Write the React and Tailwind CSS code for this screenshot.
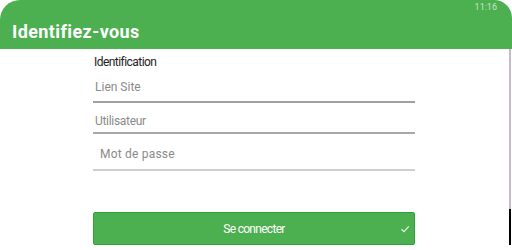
import React from "react";

export default function App() {
  const font = { fontFamily: "Roboto, 'Noto Sans', sans-serif" };
  return (
    <div className="relative w-[512px] h-[250px] bg-white overflow-hidden" style={font}>
      <div className="relative h-[49px] bg-[#4caf50] rounded-tl-[20px] rounded-tr-[18px] flex items-center pl-[12px] pt-[14px]">
        <span className="text-white font-bold text-[18px] leading-none tracking-[0.4px]">Identifiez-vous</span>
        <span className="absolute right-[15px] top-[2px] text-[9px] leading-[10px] text-[#c8e6c9]">11:16</span>
      </div>
      <div className="absolute right-[1px] top-[49px] w-[2px] h-[160px] bg-[#c4bcc4]" />
      <div className="absolute right-[1px] top-[209px] w-[2px] h-[36px] bg-black" />

      <div className="ml-[93px] w-[322px] flex flex-col">
        <div className="mt-[6px] pl-[1px] text-[12px] leading-[14px] tracking-[-0.55px] text-[#212121]">Identification</div>
        <div className="mt-[11px] pl-[2px] h-[23px] text-[12px] leading-[14px] text-[#8a8a8a] border-b-2 border-[#a0a0a0]">Lien Site</div>
        <div className="mt-[11px] pl-[2px] h-[20px] text-[12px] leading-[14px] tracking-[-0.3px] text-[#8a8a8a] border-b-2 border-[#a8a8a8]">Utilisateur</div>
        <div className="mt-[13px] pl-[7px] h-[24px] text-[12px] leading-[14px] tracking-[0.2px] text-[#8a8a8a] border-b-2 border-[#cfcfcf]">Mot de passe</div>
        <button className="mt-[41px] relative h-[33px] w-[322px] bg-[#4caf50] border border-[#2fa33a] rounded-[2px] flex items-center justify-center text-white text-[12px] tracking-[-0.7px]">
          <span>Se connecter</span>
          <svg className="absolute right-[4px] top-[11px]" width="10" height="10" viewBox="0 0 10 10" fill="none">
            <path d="M1.5 5.2 L4 7.6 L8.8 2.4" stroke="#e8f5e9" strokeWidth="1.2" />
          </svg>
        </button>
      </div>
    </div>
  );
}
